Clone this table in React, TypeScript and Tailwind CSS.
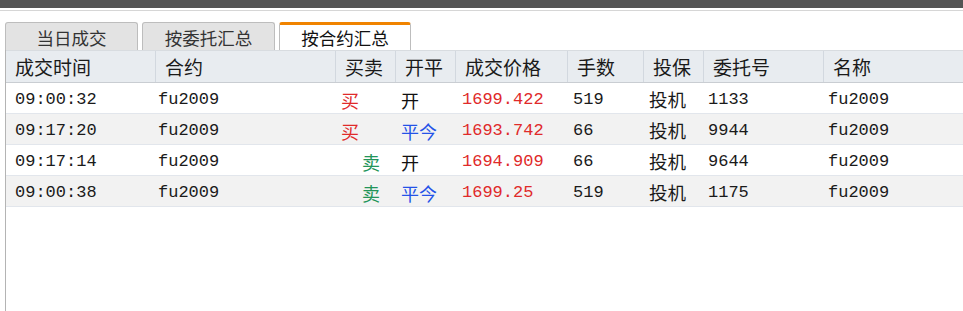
const mono = "font-['Liberation_Mono','Noto_Sans_CJK_SC',monospace]";
const cjk = "font-['Noto_Sans_CJK_SC','Liberation_Sans',sans-serif]";

const cols = [
  { title: "成交时间", w: "w-[150px]" },
  { title: "合约", w: "w-[180px]" },
  { title: "买卖", w: "w-[60px]" },
  { title: "开平", w: "w-[60px]" },
  { title: "成交价格", w: "w-[112px]" },
  { title: "手数", w: "w-[76px]" },
  { title: "投保", w: "w-[60px]" },
  { title: "委托号", w: "w-[120px]" },
  { title: "名称", w: "flex-1" },
];

const rows = [
  { time: "09:00:32", code: "fu2009", side: "买", oc: "开", price: "1699.422", qty: "519", hedge: "投机", id: "1133" },
  { time: "09:17:20", code: "fu2009", side: "买", oc: "平今", price: "1693.742", qty: "66", hedge: "投机", id: "9944" },
  { time: "09:17:14", code: "fu2009", side: "卖", oc: "开", price: "1694.909", qty: "66", hedge: "投机", id: "9644" },
  { time: "09:00:38", code: "fu2009", side: "卖", oc: "平今", price: "1699.25", qty: "519", hedge: "投机", id: "1175" },
];

const tabs = ["当日成交", "按委托汇总", "按合约汇总"];

export default function App() {
  return (
    <div className="h-[311px] w-[963px] overflow-hidden bg-white text-[#111]">
      <div className="h-2 bg-[#545454]" />
      <div className="mt-[2px] h-px bg-[#d6d6d6]" />
      <div className="ml-[5px] mt-[11px] flex h-[28px] items-end gap-[4px]">
        {tabs.map((t, i) =>
          i === 2 ? (
            <div
              key={t}
              className={`flex h-[28px] w-[132px] items-center justify-center rounded-t-[3px] border-x border-t-[3px] border-x-[#bdbdbd] border-t-[#f08300] bg-white pt-[1px] text-[17.5px] ${cjk}`}
            >
              {t}
            </div>
          ) : (
            <div
              key={t}
              className={`flex h-[28px] w-[133px] items-center justify-center rounded-t-[3px] border-x border-t border-[#bdbdbd] bg-[#e3e3e3] pt-[3px] text-[17.5px] text-[#333] ${cjk}`}
            >
              {t}
            </div>
          )
        )}
      </div>
      <div className="ml-[5px] h-[261px] border-l border-[#b4b4b4]">
        <div className="flex h-[33px] border-y border-t-[#d8dce0] border-b-[#c9cdd2] bg-[#e8ecf0]">
          {cols.map((c, i) => (
            <div
              key={c.title}
              className={`${c.w} flex items-center pl-[9px] pt-[2px] text-[19px] text-[#1a1a1a] ${cjk} ${
                i < cols.length - 1 ? "border-r border-[#d2d8df]" : ""
              }`}
            >
              {c.title}
            </div>
          ))}
        </div>
        {rows.map((r, i) => (
          <div
            key={i}
            className={`flex h-[31px] items-center border-b border-[#e2e6ec] pt-[4px] text-[17px] text-[#1a1a1a] ${mono} ${
              i % 2 ? "bg-[#f2f2f2]" : "bg-white"
            }`}
          >
            <div className="w-[150px] pl-[9px]">{r.time}</div>
            <div className="w-[180px] pl-[2px]">{r.code}</div>
            <div
              className={`w-[60px] text-[18px] ${cjk} ${
                r.side === "买" ? "pl-[5px] text-[#e02a2a]" : "pl-[26px] text-[#23955a]"
              }`}
            >
              {r.side}
            </div>
            <div
              className={`w-[60px] pl-[5px] text-[18px] ${cjk} ${
                r.oc === "开" ? "text-[#111]" : "text-[#2452e8]"
              }`}
            >
              {r.oc}
            </div>
            <div className="w-[112px] pl-[6px] text-[#e02a2a]">{r.price}</div>
            <div className="w-[76px] pl-[5px]">{r.qty}</div>
            <div className={`w-[60px] pl-[5px] text-[18.5px] ${cjk}`}>{r.hedge}</div>
            <div className="w-[120px] pl-[4px]">{r.id}</div>
            <div className="flex-1 pl-[4px]">{r.code}</div>
          </div>
        ))}
      </div>
    </div>
  );
}
